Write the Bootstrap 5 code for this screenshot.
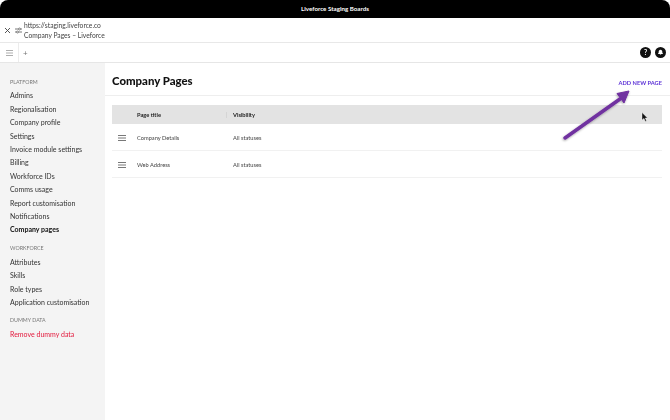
<!DOCTYPE html>
<html lang="en"><head><meta charset="utf-8"><title>Company Pages – Liveforce</title>
<link href="https://cdn.jsdelivr.net/npm/bootstrap@5.3.0/dist/css/bootstrap.min.css" rel="stylesheet">
<style>
html,body{width:670px;height:420px;overflow:hidden;background:#fff;font-family:"Lato",sans-serif;color:#333}
.shell{width:670px;height:420px;position:relative;filter:blur(.25px)}
.titlebar{height:18px;background:#000;color:#fff;font-size:6.2px;font-weight:700;border-radius:8px 8px 0 0}
.addr{height:25px;border-bottom:1px solid #e8e8e8;padding:1px 0 0 4px}
.addr-text{font-size:6.7px;line-height:9.6px;color:#444;margin-left:2px}
.tabs{height:20px;border-bottom:1px solid #e6e6e6}
.menu-cell{width:19px;height:100%;border-right:1px solid #ececec}
.plus{font-size:8px;color:#777;margin-left:4px;line-height:1}
.round-ic{width:11px;height:11px;border-radius:50%;background:#111;color:#fff;font-size:7px;font-weight:700;line-height:1}
.body-area{height:357px}
.side{width:105px;background:#f4f4f4;padding:13px 0 0 10px;flex:none}
.side-h{font-size:5.3px;line-height:13.4px;color:#777;margin:0;text-transform:uppercase}
.side-h.next{margin-top:5.6px}
.side-h.later{margin-top:4.6px}
.side-l{display:block;font-size:7px;line-height:13.4px;color:#333;text-decoration:none}
.side-l.on{color:#111;font-weight:700}
.side-l.danger{color:#e3183c}
.main{flex:1;min-width:0;padding:0 8px 0 7px}
.head-row{height:33px;margin-left:-7px;margin-right:-8px;padding:3px 8px 0 7px;border-bottom:1px solid #eee}
.page-title{font-size:11.4px;font-weight:900;color:#111;margin:0;line-height:1}
.add-link{font-size:5.7px;font-weight:700;color:#5a2fd6;text-decoration:none;margin-top:5px}
.tbl{width:550px;margin-top:9px;font-size:5.7px;color:#444}
.tbl-head{height:19px;background:#e3e3e3;font-weight:700;color:#222;padding-top:1px}
.tbl-row{height:27px;border-bottom:1px solid #f1f1f1;padding-top:2px}
.c-h{width:25px;flex:none;padding-left:6px}
.c-t{width:96px;flex:none}
.c-v{flex:1}
.divider{border-left:1px solid #d5d5d5;height:6px;margin:0 6px 0 -7px;display:inline-block;vertical-align:middle}
.bars{display:block;width:8px;height:6px}
.arrow{position:absolute;left:555px;top:85px;width:85px;height:60px;pointer-events:none}
.cursor{position:absolute;left:641px;top:112px;width:7px;height:11px}
</style></head><body>
<div class="shell d-flex flex-column">
 <div class="titlebar d-flex align-items-center justify-content-center">Liveforce Staging Boards</div>
 <div class="addr d-flex align-items-center">
  <svg width="7" height="7" viewBox="0 0 7 7"><path d="M1 1l5 5M6 1L1 6" stroke="#444" stroke-width=".9"/></svg>
  <svg width="7" height="7" viewBox="0 0 7 7" class="ms-1"><path d="M0 2h3.500M5.500 2H7M0 5h1.500M3.500 5H7" stroke="#555" stroke-width=".8"/><circle cx="4.500" cy="2" r="1" fill="none" stroke="#555" stroke-width=".7"/><circle cx="2.500" cy="5" r="1" fill="none" stroke="#555" stroke-width=".7"/></svg>
  <div class="addr-text"><div>https://staging.liveforce.co</div><div>Company Pages – Liveforce</div></div>
 </div>
 <div class="tabs d-flex align-items-center">
  <div class="menu-cell d-flex align-items-center justify-content-center"><svg width="7" height="6" viewBox="0 0 7 6"><path d="M0 .5h7M0 3h7M0 5.500h7" stroke="#999" stroke-width=".8"/></svg></div>
  <span class="plus">+</span>
  <div class="ms-auto d-flex gap-1 pe-1">
   <span class="round-ic d-flex align-items-center justify-content-center">?</span>
   <span class="round-ic d-flex align-items-center justify-content-center"><svg width="7" height="7" viewBox="0 0 7 7"><path d="M3.500.8C2.200.8 1.700 1.800 1.700 3c0 1-.5 1.400-.8 1.900h5.200C5.800 4.400 5.300 4 5.300 3c0-1.200-.5-2.200-1.800-2.200zM2.800 5.400h1.400a.7.7 0 0 1-1.400 0z" fill="#fff"/></svg></span>
  </div>
 </div>
 <div class="body-area d-flex">
  <nav class="side">
   <p class="side-h">Platform</p>
   <a class="side-l" href="#">Admins</a><a class="side-l" href="#">Regionalisation</a><a class="side-l" href="#">Company profile</a><a class="side-l" href="#">Settings</a><a class="side-l" href="#">Invoice module settings</a><a class="side-l" href="#">Billing</a><a class="side-l" href="#">Workforce IDs</a><a class="side-l" href="#">Comms usage</a><a class="side-l" href="#">Report customisation</a><a class="side-l" href="#">Notifications</a><a class="side-l on" href="#">Company pages</a>
   <p class="side-h next">Workforce</p>
   <a class="side-l" href="#">Attributes</a><a class="side-l" href="#">Skills</a><a class="side-l" href="#">Role types</a><a class="side-l" href="#">Application customisation</a>
   <p class="side-h later">Dummy data</p>
   <a class="side-l danger" href="#">Remove dummy data</a>
  </nav>
  <main class="main">
   <div class="head-row d-flex align-items-center justify-content-between">
    <h1 class="page-title">Company Pages</h1>
    <a class="add-link" href="#">ADD NEW PAGE</a>
   </div>
   <div class="tbl">
    <div class="tbl-head d-flex align-items-center"><div class="c-h"></div><div class="c-t">Page title</div><div class="c-v"><span class="divider"></span>Visibility</div></div>
    <div class="tbl-row d-flex align-items-center"><div class="c-h"><svg class="bars" viewBox="0 0 8 6"><path d="M0 .5h8M0 3h8M0 5.500h8" stroke="#555" stroke-width=".8"/></svg></div><div class="c-t">Company Details</div><div class="c-v">All statuses</div></div>
    <div class="tbl-row d-flex align-items-center"><div class="c-h"><svg class="bars" viewBox="0 0 8 6"><path d="M0 .5h8M0 3h8M0 5.500h8" stroke="#555" stroke-width=".8"/></svg></div><div class="c-t">Web Address</div><div class="c-v">All statuses</div></div>
   </div>
  </main>
 </div>
 <svg class="arrow" viewBox="0 0 85 60"><defs><filter id="sh" x="-20%" y="-20%" width="140%" height="140%"><feDropShadow dx="-0.500" dy="1" stdDeviation="0.800" flood-color="#000" flood-opacity=".35"/></filter></defs><g filter="url(#sh)"><path d="M10 53L65 14" stroke="#7030a0" stroke-width="3.500" stroke-linecap="round" fill="none"/><path d="M74 6L62 8.500L69 18Z" fill="#7030a0" stroke="#7030a0" stroke-linejoin="round"/></g></svg>
 <svg class="cursor" viewBox="0 0 7 11"><path d="M1 .5V8L3 6.400 4.300 9.500 5.500 9 4.300 6H6.500Z" fill="#111" stroke="#fff" stroke-width=".4"/></svg>
</div>
<script src="https://cdn.jsdelivr.net/npm/bootstrap@5.3.0/dist/js/bootstrap.bundle.min.js"></script>
</body></html>
